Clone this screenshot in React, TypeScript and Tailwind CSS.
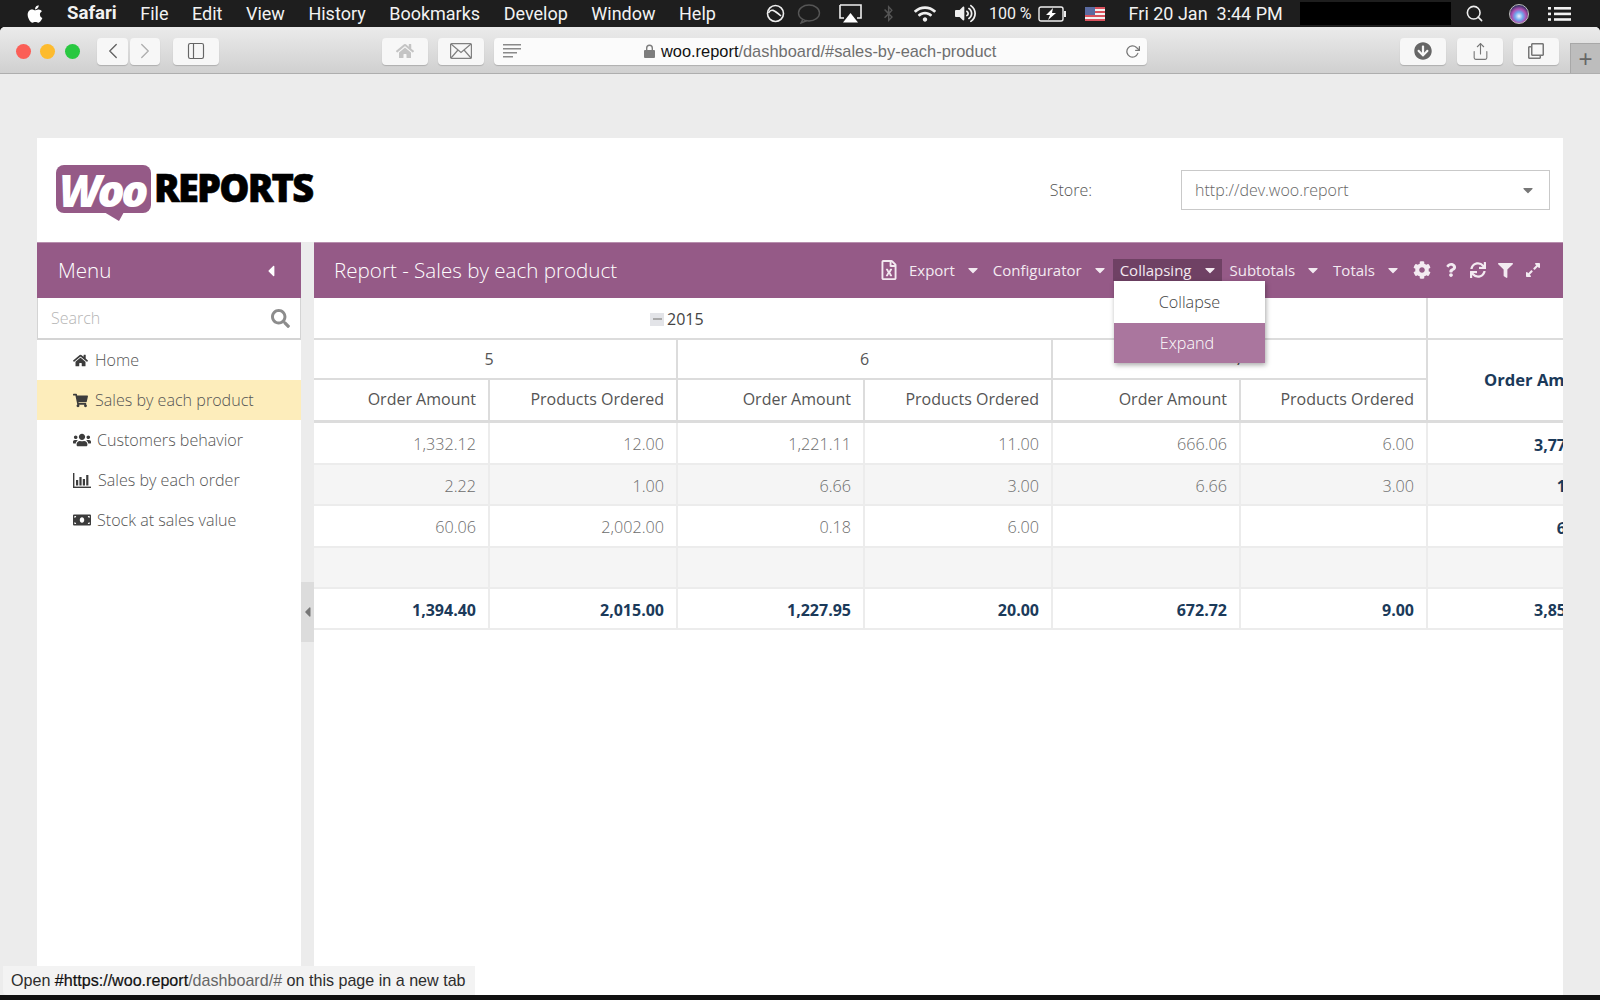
import {
  FaApple,
  FaArrowCircleDown,
  FaBluetoothB,
  FaCaretDown,
  FaCaretLeft,
  FaCog,
  FaExpandAlt,
  FaFilter,
  FaHome,
  FaMoneyBill,
  FaQuestion,
  FaRegClone,
  FaRegFileExcel,
  FaSearch,
  FaShoppingCart,
  FaSync,
  FaUsers,
  FaVolumeUp,
  FaWifi,
} from "react-icons/fa";
import { FiChevronLeft, FiChevronRight, FiRotateCw, FiSearch, FiShare, FiSidebar } from "react-icons/fi";

const sans = "font-['Open_Sans',sans-serif]";

const menuBarItems = ["File", "Edit", "View", "History", "Bookmarks", "Develop", "Window", "Help"];

function BarChartIcon() {
  return (
    <svg width="18" height="15" viewBox="0 0 18 15" fill="currentColor">
      <rect x="0" y="0" width="1.4" height="15" />
      <rect x="0" y="13.6" width="18" height="1.4" />
      <rect x="3" y="7" width="2.2" height="5.5" />
      <rect x="6.4" y="4" width="2.2" height="8.5" />
      <rect x="9.8" y="6" width="2.2" height="6.5" />
      <rect x="13.2" y="2" width="2.2" height="10.5" />
    </svg>
  );
}

const sideItems = [
  { label: "Home", icon: <FaHome size={15} />, gap: "ml-[7px]" },
  { label: "Sales by each product", icon: <FaShoppingCart size={15} />, gap: "ml-[7px]", active: true },
  { label: "Customers behavior", icon: <FaUsers size={18} />, gap: "ml-[6px]" },
  { label: "Sales by each order", icon: <BarChartIcon />, gap: "ml-[7px]" },
  { label: "Stock at sales value", icon: <FaMoneyBill size={18} />, gap: "ml-[6px]" },
];

const rows = [
  ["1,332.12", "12.00", "1,221.11", "11.00", "666.06", "6.00", "3,776.29"],
  ["2.22", "1.00", "6.66", "3.00", "6.66", "3.00", "15.54"],
  ["60.06", "2,002.00", "0.18", "6.00", "", "", "60.24"],
  ["", "", "", "", "", "", ""],
];
const totals = ["1,394.40", "2,015.00", "1,227.95", "20.00", "672.72", "9.00", "3,852.07"];

const columns = "grid-cols-[174px_188px_187px_188px_188px_187px_184px]";

function ToolbarButton({ className, children }: { className: string; children?: React.ReactNode }) {
  return (
    <div
      className={`h-[27px] rounded-[4px] bg-[#f7f7f7] shadow-[0_1px_1px_rgba(0,0,0,0.18)] flex items-center justify-center text-[#777] ${className}`}
    >
      {children}
    </div>
  );
}

function ReportMenu({ label, className }: { label: string; className: string }) {
  return (
    <div className={`h-[22px] flex items-center ${className}`}>
      <span>{label}</span>
      <FaCaretDown size={16} className="ml-[10px]" />
    </div>
  );
}

function UsFlag() {
  return (
    <svg width="20" height="14" viewBox="0 0 20 14">
      <rect width="20" height="14" fill="#f2f2f2" />
      <rect y="0" width="20" height="2" fill="#d8505c" />
      <rect y="4" width="20" height="2" fill="#d8505c" />
      <rect y="8" width="20" height="2" fill="#d8505c" />
      <rect y="12" width="20" height="2" fill="#d8505c" />
      <rect width="10" height="8" fill="#5a6aa0" />
    </svg>
  );
}

export default function App() {
  return (
    <div className={`relative w-[1600px] h-[1000px] overflow-hidden bg-[#111] ${sans}`}>
      {/* mac menu bar */}
      <div className="h-[27px] bg-[#1e1e1e] text-[#f2f2f2] flex items-center font-['Roboto',sans-serif] text-[18px] relative">
        <FaApple size={20} className="ml-[25px] text-white" />
        <span className="ml-[22px] font-bold text-[18.6px]">Safari</span>
        {menuBarItems.map((m) => (
          <span key={m} className="ml-[23.5px]">
            {m}
          </span>
        ))}
        <svg width="19" height="19" viewBox="0 0 19 19" className="ml-[50px]" fill="none" stroke="#eee" strokeWidth="1.6">
          <circle cx="9.5" cy="9.5" r="8" />
          <path d="M2.5 9 C5 4 8 6 15 12" />
        </svg>
        <svg width="24" height="20" viewBox="0 0 24 20" className="ml-[12px]" fill="none" stroke="#555" strokeWidth="1.4">
          <ellipse cx="12" cy="9" rx="10.5" ry="8" />
          <path d="M6 15 L4 19 L10 16.5" />
        </svg>
        <svg width="23" height="19" viewBox="0 0 23 19" className="ml-[18px]">
          <path d="M1 1 H22 V14 H18 M5 14 H1 V1" fill="none" stroke="#eee" strokeWidth="1.6" />
          <path d="M11.5 9 L19 18.5 H4 Z" fill="#fff" />
        </svg>
        <FaBluetoothB size={17} className="ml-[18px] text-[#555]" />
        <FaWifi size={22} className="ml-[17px] text-[#eee]" />
        <FaVolumeUp size={21} className="ml-[19px] text-[#eee]" />
        <span className="ml-[13px] text-[16px]">100 %</span>
        <svg width="28" height="16" viewBox="0 0 28 16" className="ml-[6px]" fill="none">
          <rect x="1" y="1" width="24" height="14" rx="2" stroke="#eee" strokeWidth="1.4" />
          <rect x="26" y="5" width="2" height="6" fill="#eee" />
          <path d="M15 2 L8 9 H12 L10 14 L18 7 H14 Z" fill="#fff" />
        </svg>
        <div className="ml-[19px]">
          <UsFlag />
        </div>
        <span className="ml-[24px] whitespace-pre">Fri 20 Jan  3:44 PM</span>
        <div className="ml-[17px] w-[151px] h-[23px] bg-black" />
        <FiSearch size={19} className="ml-[14px] text-[#eee]" />
        <div className="ml-[25px] w-[20px] h-[20px] rounded-full border border-[#bbb] bg-[radial-gradient(circle_at_50%_62%,#eef3ff_0%,#6fa8ee_28%,#b04fb0_50%,#1d2a55_80%)]" />
        <svg width="23" height="14" viewBox="0 0 23 14" className="ml-[19px]" fill="#f2f2f2">
          <rect x="0" y="0" width="3" height="2.6" />
          <rect x="0" y="5.6" width="3" height="2.6" />
          <rect x="0" y="11.2" width="3" height="2.6" />
          <rect x="6" y="0" width="17" height="2.6" />
          <rect x="6" y="5.6" width="17" height="2.6" />
          <rect x="6" y="11.2" width="17" height="2.6" />
        </svg>
      </div>

      {/* browser window */}
      <div className="h-[968px] rounded-t-[5px] bg-[#ececec] overflow-hidden flex flex-col">
        <div className="relative h-[47px] shrink-0 pt-[2px] bg-gradient-to-b from-[#ebebeb] to-[#d0d0d0] border-b border-[#aeaeae] flex items-center">
          <div className="ml-[16px] w-[15px] h-[15px] rounded-full bg-[#fb5f57]" />
          <div className="ml-[9px] w-[15px] h-[15px] rounded-full bg-[#fdbb2e]" />
          <div className="ml-[10px] w-[15px] h-[15px] rounded-full bg-[#29c841]" />
          <ToolbarButton className="ml-[17px] w-[31px]">
            <FiChevronLeft size={26} strokeWidth={1.3} className="text-[#666]" />
          </ToolbarButton>
          <ToolbarButton className="ml-[2px] w-[30px]">
            <FiChevronRight size={26} strokeWidth={1.3} className="text-[#b0b0b0]" />
          </ToolbarButton>
          <ToolbarButton className="ml-[13px] w-[46px]">
            <FiSidebar size={20} strokeWidth={1.4} className="text-[#666]" />
          </ToolbarButton>
          <ToolbarButton className="ml-[163px] w-[46px]">
            <FaHome size={18} className="text-[#c4c4c4]" />
          </ToolbarButton>
          <ToolbarButton className="ml-[10px] w-[46px]">
            <svg width="22" height="16" viewBox="0 0 22 16" fill="none" stroke="#808080" strokeWidth="1.2">
              <rect x="0.6" y="0.6" width="20.8" height="14.8" rx="1" />
              <path d="M1 1 L11 9.5 L21 1 M1 15 L8 7 M21 15 L14 7" />
            </svg>
          </ToolbarButton>
          <ToolbarButton className="ml-[10px] w-[653px] relative justify-start bg-[#fbfbfb]">
            <svg width="18" height="14" viewBox="0 0 18 14" className="ml-[9px]" fill="#8a8a8a">
              <rect width="18" height="1.5" />
              <rect y="4" width="18" height="1.5" />
              <rect y="8" width="14" height="1.5" />
              <rect y="12" width="10" height="1.5" />
            </svg>
            <svg width="11" height="14" viewBox="0 0 11 14" className="ml-[123px]" fill="#7d7d7d">
              <path d="M2 6 V4 A3.5 3.5 0 0 1 9 4 V6 H7.6 V4 A2.1 2.1 0 0 0 3.4 4 V6 Z" />
              <rect y="6" width="11" height="8" rx="1" />
            </svg>
            <span className="ml-[6px] text-[16.4px] font-['Liberation_Sans',sans-serif] text-[#6f6f6f]">
              <span className="text-[#111]">woo.report</span>/dashboard/#sales-by-each-product
            </span>
            <FiRotateCw size={15} className="absolute right-[7px] text-[#777]" />
          </ToolbarButton>
          <ToolbarButton className="ml-[253px] w-[46px]">
            <FaArrowCircleDown size={18} className="text-[#666]" />
          </ToolbarButton>
          <ToolbarButton className="ml-[11px] w-[46px]">
            <FiShare size={19} strokeWidth={1.4} className="text-[#777]" />
          </ToolbarButton>
          <ToolbarButton className="ml-[10px] w-[46px]">
            <FaRegClone size={16} className="text-[#777]" />
          </ToolbarButton>
          <div className="absolute right-0 bottom-0 w-[30px] h-[30px] bg-[#bdbdbd] border-l border-t border-[#a8a8a8] flex items-center justify-center font-['Liberation_Sans',sans-serif] text-[24px] font-light text-[#666]">
            +
          </div>
        </div>

        {/* app card */}
        <div className="mt-[64px] ml-[37px] w-[1526px] flex-1 bg-white flex flex-col">
          <div className="h-[104px] shrink-0 flex items-start">
            <div className="ml-[19px] mt-[27px] relative w-[95px] h-[56px] shrink-0">
              <div className="w-[95px] h-[48px] rounded-[8px] bg-[#955a87] flex items-center justify-center">
                <span className="text-white text-[45px] leading-none font-extrabold italic tracking-[-3.5px] pr-[3px] font-['Open_Sans',sans-serif]">
                  Woo
                </span>
              </div>
              <svg width="22" height="10" viewBox="0 0 22 10" className="absolute left-[48px] top-[47px]">
                <path d="M0 0 H20 L15 9 Z" fill="#955a87" />
              </svg>
            </div>
            <span className="ml-[3px] mt-[23px] text-[38px] leading-[52px] font-extrabold text-black tracking-[-1.8px] [-webkit-text-stroke:0.6px_black]">
              REPORTS
            </span>
            <span className="ml-auto mt-[40px] text-[16px] leading-[24px] font-light text-[#555]">Store:</span>
            <div className="ml-[89px] mr-[13px] mt-[32px] w-[369px] h-[40px] border border-[#c9c9c9] flex items-center justify-between pl-[13px] pr-[13px] text-[16px] font-light text-[#666]">
              <span>http://dev.woo.report</span>
              <FaCaretDown size={16} className="text-[#777]" />
            </div>
          </div>

          <div className="flex-1 flex min-h-0">
            {/* sidebar */}
            <div className="w-[264px] shrink-0 flex flex-col">
              <div className="h-[56px] shrink-0 bg-[#955a87] text-white flex items-center justify-between pl-[21px] pr-[21px] border-t border-[#b88fae]">
                <span className="text-[20.6px] font-light">Menu</span>
                <FaCaretLeft size={18} />
              </div>
              <div className="h-[42px] shrink-0 border-x border-b-2 border-[#d4d4d4] flex items-center justify-between pl-[13px] pr-[10px]">
                <span className="text-[16px] font-light text-[#b5b5b5]">Search</span>
                <FaSearch size={19} className="text-[#8c8c8c]" />
              </div>
              {sideItems.map((item) => (
                <div
                  key={item.label}
                  className={`h-[40px] shrink-0 flex items-center pl-[36px] text-[16.1px] font-light text-[#555] ${item.active ? "bg-[#fdedbb]" : ""}`}
                >
                  <span className="text-[#3c3c3c]">{item.icon}</span>
                  <span className={item.gap}>{item.label}</span>
                </div>
              ))}
            </div>

            {/* splitter */}
            <div className="w-[13px] shrink-0 bg-[#ececec] pt-[340px]">
              <div className="h-[60px] bg-[#dcdcdc] flex items-center justify-center">
                <FaCaretLeft size={16} className="text-[#777]" />
              </div>
            </div>

            {/* report */}
            <div className="relative flex-1 min-w-0 flex flex-col">
              <div className="h-[56px] shrink-0 pb-[1px] bg-[#955a87] text-[#f3eaf1] flex items-center pl-[20px] pr-[22px] border-t border-[#b88fae] text-[15px]">
                <span className="text-[20.6px] font-light text-white whitespace-nowrap mr-auto">
                  Report - Sales by each product
                </span>
                <FaRegFileExcel size={20} />
                <ReportMenu label="Export" className="ml-[10px]" />
                <ReportMenu label="Configurator" className="ml-[12px]" />
                <ReportMenu label="Collapsing" className="ml-[5px] bg-[#6f4164] pl-[7px] pr-[4px]" />
                <ReportMenu label="Subtotals" className="ml-[8px]" />
                <ReportMenu label="Totals" className="ml-[12px]" />
                <FaCog size={18} className="ml-[12px]" />
                <FaQuestion size={14} className="ml-[13px]" />
                <FaSync size={16} className="ml-[12px]" />
                <FaFilter size={15} className="ml-[12px]" />
                <FaExpandAlt size={16} className="ml-[12px]" />
              </div>

              <div className={`grid ${columns} w-[1249px] overflow-hidden text-[16px]`}>
                {/* year row */}
                <div className="col-span-6 h-[42px] pt-[2px] border-b-2 border-[#dcdcdc] flex items-center pl-[336px] text-[#444]">
                  <span className="w-[14px] h-[13px] bg-[#e3e4e8] flex items-center justify-center mr-[3px]">
                    <span className="w-[9px] h-[2px] bg-[#aaa]" />
                  </span>
                  2015
                </div>
                <div className="h-[42px] border-l-2 border-b-2 border-[#dcdcdc]" />

                {/* month row */}
                <div className="col-span-2 h-[40px] border-b-2 border-[#dcdcdc] flex items-center justify-center pr-[12px] text-[#555]">
                  5
                </div>
                <div className="col-span-2 h-[40px] border-l-2 border-b-2 border-[#dcdcdc] flex items-center justify-center text-[#555]">
                  6
                </div>
                <div className="col-span-2 h-[40px] border-l-2 border-b-2 border-[#dcdcdc] flex items-center justify-center text-[#555]">
                  7
                </div>
                <div className="row-span-2 h-[83px] border-l-2 border-b-[3px] border-[#dcdcdc] flex items-center pl-[56px] text-[16.6px] font-bold text-[#1b3a5a] whitespace-nowrap">
                  Order Amount
                </div>

                {/* measure row */}
                {["Order Amount", "Products Ordered", "Order Amount", "Products Ordered", "Order Amount", "Products Ordered"].map(
                  (h, i) => (
                    <div
                      key={i}
                      className={`h-[43px] pb-[2px] border-b-[3px] border-[#dcdcdc] flex items-center justify-end pr-[12px] text-[#555] ${i === 0 ? "" : "border-l-2"}`}
                    >
                      {h}
                    </div>
                  ),
                )}

                {/* data */}
                {rows.map((row, r) =>
                  row.map((v, c) => (
                    <div
                      key={`${r}-${c}`}
                      className={`pt-[3px] border-b-2 border-[#ececec] flex items-center justify-end pr-[12px] ${r === 0 || r === 2 ? "h-[42px]" : "h-[41px]"} ${c === 0 ? "" : "border-l-2"} ${r % 2 === 1 ? "bg-[#f5f5f5]" : ""} ${c === 6 ? "font-bold text-[#1b3a5a]" : "font-light text-[#6c6c6c] text-[16.2px]"}`}
                    >
                      {v}
                    </div>
                  )),
                )}
                {totals.map((v, c) => (
                  <div
                    key={c}
                    className={`h-[41px] pt-[2px] border-b-2 border-[#ececec] flex items-center justify-end pr-[12px] font-bold text-[#1b3a5a] ${c === 0 ? "" : "border-l-2"}`}
                  >
                    {v}
                  </div>
                ))}
              </div>

              {/* collapsing menu */}
              <div className="absolute left-[800px] top-[39px] w-[151px] bg-white shadow-[1px_2px_5px_rgba(0,0,0,0.35)] text-[16.2px] font-light">
                <div className="h-[42px] flex items-center justify-center text-[#444]">Collapse</div>
                <div className="h-[40px] bg-[#aa769e] text-white flex items-center justify-center pr-[5px]">Expand</div>
              </div>
            </div>
          </div>
        </div>
      </div>

      {/* link status */}
      <div className="absolute left-[3px] top-[966px] w-[472px] h-[29px] bg-[#f3f3f3] rounded-bl-[4px] flex items-center pl-[8px] text-[16.1px] font-['Liberation_Sans',sans-serif] text-[#2d2d2d] whitespace-nowrap">
        Open&nbsp;<span className="text-[#111] [-webkit-text-stroke:0.2px_#111]">#https://woo.report</span>
        <span className="text-[#666]">/dashboard/#</span>&nbsp;on this page in a new tab
      </div>
    </div>
  );
}
